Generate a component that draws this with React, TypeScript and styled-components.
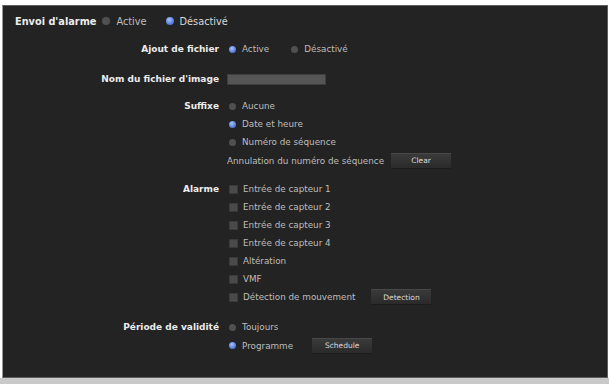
import * as React from 'react';
import styled, { createGlobalStyle } from 'styled-components';

const GlobalStyle = createGlobalStyle`
  html, body {
    margin: 0;
    padding: 0;
    background: #ffffff;
  }
  body {
    font-family: 'DejaVu Sans', Verdana, sans-serif;
  }
`;

const Page = styled.div`
  width: 609px;
  height: 384px;
  display: flex;
  flex-direction: column;
  padding-top: 5px;
  box-sizing: border-box;
  background: #ffffff;
`;

const Panel = styled.div`
  flex: 1;
  margin: 0 1px 0 2px;
  background: #232323;
  border: 1px solid #5e5e5e;
  border-left-color: #9a9a9a;
  padding-top: 6px;
`;

const Footer = styled.div`
  height: 6px;
  background: #c9c9c9;
`;

const TopRow = styled.div`
  display: flex;
  align-items: center;
  height: 18px;
  padding-left: 12px;
  font-size: 9.75px;
`;

const TopTitle = styled.span`
  font-weight: bold;
  color: #ececec;
  margin-right: 4px;
`;

const Form = styled.div`
  display: grid;
  grid-template-columns: 216px 1fr;
  column-gap: 8px;
`;

const Section = styled.div<{ $gap?: number }>`
  display: contents;
  & > * {
    margin-top: ${p => p.$gap ?? 10}px;
  }
`;

const Label = styled.div`
  text-align: right;
  font-weight: bold;
  font-size: 9px;
  color: #ececec;
  height: 18px;
  line-height: 18px;
  white-space: nowrap;
`;

const Options = styled.div`
  display: flex;
  flex-direction: column;
`;

const Line = styled.div<{ $h?: number }>`
  display: flex;
  align-items: center;
  height: ${p => p.$h ?? 18}px;
  font-size: 8.8px;
  color: #bdbdbd;
  white-space: nowrap;
`;

const Choice = styled.span<{ $space?: number }>`
  display: inline-flex;
  align-items: center;
  margin-right: ${p => p.$space ?? 0}px;
`;

const Radio = styled.span<{ $on?: boolean; $big?: boolean }>`
  display: inline-block;
  width: ${p => (p.$big ? 8 : 7)}px;
  height: ${p => (p.$big ? 8 : 7)}px;
  margin: 0 6px 0 2px;
  border-radius: 50%;
  background: ${p =>
    p.$on
      ? 'radial-gradient(circle at 40% 35%, #a9c2ff 0%, #5f84e0 55%, #3c5cb0 100%)'
      : '#505050'};
`;

const Box = styled.span`
  display: inline-block;
  width: 9px;
  height: 9px;
  margin: 0 5px 0 2px;
  background: #4a4a4a;
  border: 1px solid #3a3a3a;
  box-sizing: border-box;
`;

const TextInput = styled.div`
  width: 99px;
  height: 11px;
  background: #555555;
  border: 1px solid #3e3e3e;
  box-sizing: border-box;
`;

const Button = styled.span<{ $left: number }>`
  display: inline-flex;
  align-items: center;
  justify-content: center;
  width: 60px;
  height: 16px;
  margin-left: ${p => p.$left}px;
  background: linear-gradient(#3a3a3a, #2a2a2a);
  border-top: 1px solid #474747;
  border-bottom: 1px solid #1c1c1c;
  box-sizing: border-box;
  font-size: 7.5px;
  color: #dcdcdc;
`;

const sensors = ['Entrée de capteur 1', 'Entrée de capteur 2', 'Entrée de capteur 3', 'Entrée de capteur 4', 'Altération', 'VMF'];

export default function App() {
  return (
    <>
      <GlobalStyle />
      <Page>
        <Panel>
          <TopRow>
            <TopTitle>Envoi d'alarme</TopTitle>
            <Choice $space={17}>
              <Radio $big />
              <span style={{ color: '#bdbdbd' }}>Active</span>
            </Choice>
            <Choice>
              <Radio $big $on />
              <span style={{ color: '#d8d8d8' }}>Désactivé</span>
            </Choice>
          </TopRow>

          <Form>
            <Section>
              <Label>Ajout de fichier</Label>
              <Options>
                <Line>
                  <Choice $space={20}>
                    <Radio $on />
                    Active
                  </Choice>
                  <Choice>
                    <Radio />
                    Désactivé
                  </Choice>
                </Line>
              </Options>
            </Section>

            <Section $gap={12}>
              <Label>Nom du fichier d'image</Label>
              <Options>
                <Line>
                  <TextInput />
                </Line>
              </Options>
            </Section>

            <Section $gap={9}>
              <Label>Suffixe</Label>
              <Options>
                <Line>
                  <Radio />
                  Aucune
                </Line>
                <Line>
                  <Radio $on />
                  Date et heure
                </Line>
                <Line>
                  <Radio />
                  Numéro de séquence
                </Line>
                <Line $h={19}>
                  Annulation du numéro de séquence
                  <Button $left={7}>Clear</Button>
                </Line>
              </Options>
            </Section>

            <Section>
              <Label>Alarme</Label>
              <Options>
                {sensors.map(s => (
                  <Line key={s}>
                    <Box />
                    {s}
                  </Line>
                ))}
                <Line>
                  <Box />
                  Détection de mouvement
                  <Button $left={16}>Detection</Button>
                </Line>
              </Options>
            </Section>

            <Section $gap={12}>
              <Label>Période de validité</Label>
              <Options>
                <Line>
                  <Radio />
                  Toujours
                </Line>
                <Line $h={19}>
                  <Radio $on />
                  Programme
                  <Button $left={19}>Schedule</Button>
                </Line>
              </Options>
            </Section>
          </Form>
        </Panel>
        <Footer />
      </Page>
    </>
  );
}
